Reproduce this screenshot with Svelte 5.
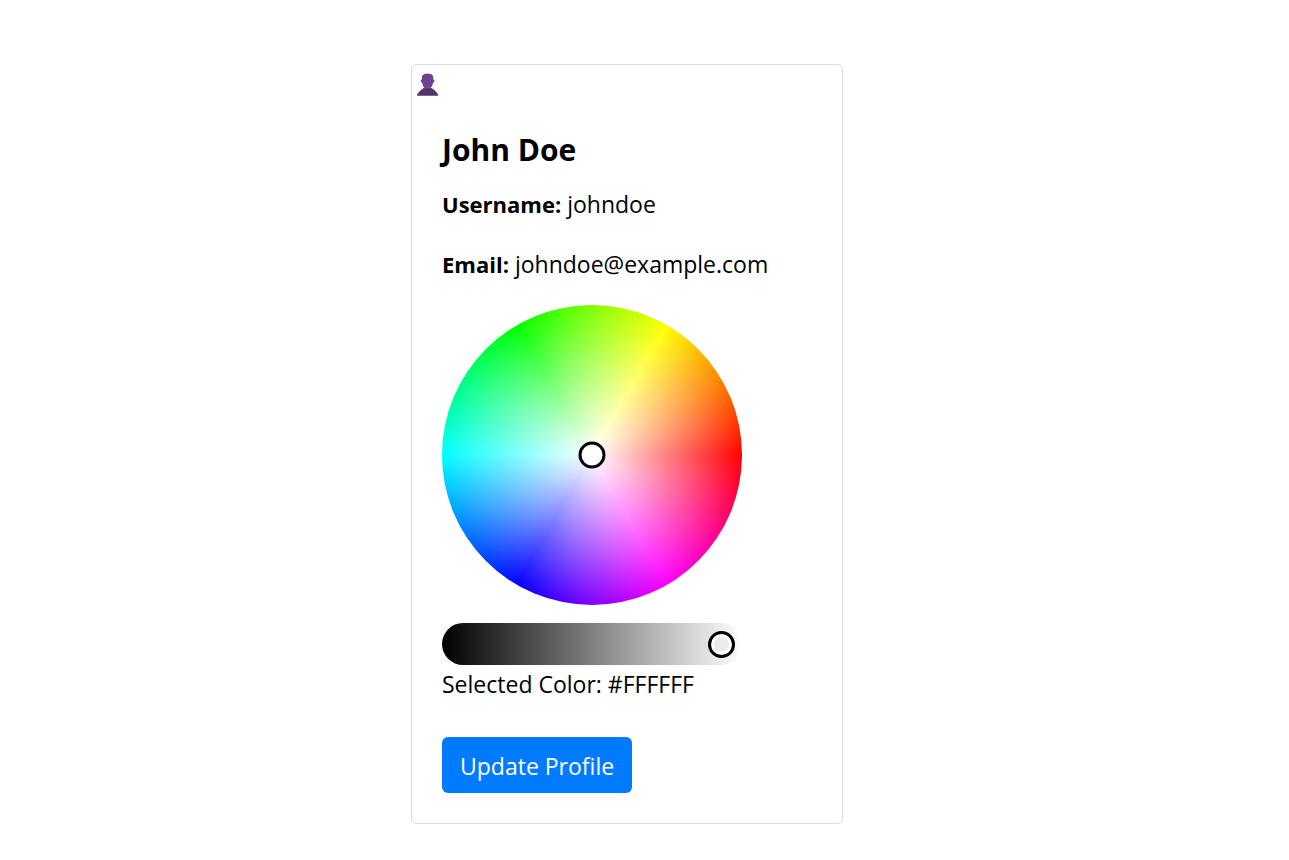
<script>
  const user = { name: 'John Doe', username: 'johndoe', email: 'johndoe@example.com' };

  let brightness = $state(100);
  let hue = $state(0);
  let saturation = $state(0);

  // HSV to hex, one channel at a time
  function channel(n, h, s, v) {
    const k = (n + h / 60) % 6;
    const level = v - v * s * Math.max(0, Math.min(k, 4 - k, 1));
    return Math.round(level * 255).toString(16).padStart(2, '0').toUpperCase();
  }

  const hex = $derived(
    '#' + [5, 3, 1].map((n) => channel(n, hue, saturation, brightness / 100)).join('')
  );
  const handleX = $derived(50 + 45 * saturation * Math.cos((hue * Math.PI) / 180));
  const handleY = $derived(50 - 45 * saturation * Math.sin((hue * Math.PI) / 180));

  function pick(event) {
    const box = event.currentTarget.getBoundingClientRect();
    const dx = event.clientX - box.left - box.width / 2;
    const dy = box.height / 2 - (event.clientY - box.top);
    hue = ((Math.atan2(dy, dx) * 180) / Math.PI + 360) % 360;
    saturation = Math.min(1, Math.hypot(dx, dy) / (box.width * 0.45));
  }
</script>

<main>
  <article class="card">
    <div class="avatar">
      <svg viewBox="0 0 22 24" role="img" aria-label="User">
        <path
          d="M0 22.700C1.200 19.300 4 16.800 7.600 15h6C17.200 16.800 20 19.300 21.200 22.700z"
          fill="#543468"
        />
        <path
          d="M.4 22.500C1.600 19.300 4 16.800 7.600 15M13.600 15C17.200 16.800 19.600 19.300 20.800 22.500"
          fill="none"
          stroke="#6b4190"
          stroke-width="1"
        />
        <path
          d="M10.600.4C7.600.4 5.600 1.400 5 3.400c-.3 1.200.2 2.200 0 3.200-1 0-1.400.7-1.200 1.600.2 1 .8 1.600 1.500 1.600.1 2.200.8 4 2.100 5 2 1.300 4.400 1.300 6.400 0 1.300-1 2-2.800 2.100-5 .7 0 1.300-.6 1.500-1.600.2-.9-.2-1.600-1.200-1.600-.2-1 .3-2 0-3.200-.6-2-2.600-3-5.600-3z"
          fill="#6b4190"
        />
      </svg>
    </div>
    <div class="body">
      <h2>{user.name}</h2>
      <p><strong>Username:</strong> {user.username}</p>
      <p><strong>Email:</strong> {user.email}</p>

      <div class="picker">
        <button class="wheel" type="button" aria-label="Hue and saturation" onclick={pick}>
          <span class="handle" style="left: {handleX}%; top: {handleY}%; background: {hex}"></span>
        </button>
        <input type="range" min="0" max="100" aria-label="Brightness" bind:value={brightness} />
      </div>
      <output>Selected Color: {hex}</output>

      <button class="update" type="button">Update Profile</button>
    </div>
  </article>
</main>

<style>
  :global(body) {
    margin: 0;
    background: #fff;
  }

  main {
    display: flex;
    justify-content: center;
    padding: 64px 35px 36px 0;
    font-family: "Open Sans", "Segoe UI", "Noto Sans", sans-serif;
    font-size: 23px;
    line-height: 38px;
    color: #000;
  }

  .card {
    box-sizing: border-box;
    width: 100%;
    max-width: 432px;
    border: 1px solid #ddd;
    border-radius: 6px;
  }

  .avatar {
    padding: 8px 5px 4px;
  }

  .avatar svg {
    display: block;
    width: 22px;
    height: 24px;
  }

  .body {
    display: flex;
    flex-direction: column;
    align-items: flex-start;
    padding: 30px;
  }

  h2 {
    margin: 0 0 16px;
    font-size: 30px;
    line-height: 38px;
    font-weight: 700;
  }

  p {
    margin: 0 0 22px;
  }

  strong {
    font-size: 22px;
    font-weight: 700;
  }

  .picker {
    display: flex;
    flex-direction: column;
    gap: 18px;
    width: 100%;
    max-width: 300px;
  }

  .wheel {
    position: relative;
    width: 100%;
    aspect-ratio: 1;
    padding: 0;
    border: 0;
    border-radius: 50%;
    background:
      radial-gradient(circle closest-side, #fff, transparent),
      conic-gradient(from 90deg, red, magenta, blue, aqua, lime, yellow, red);
  }

  .handle {
    position: absolute;
    box-sizing: border-box;
    width: 27px;
    height: 27px;
    border: 3px solid #000;
    border-radius: 50%;
    box-shadow: inset 0 0 0 5px #fff;
    transform: translate(-50%, -50%);
  }

  input {
    appearance: none;
    box-sizing: border-box;
    width: 100%;
    height: 42px;
    margin: 0;
    padding: 0 7px;
    border-radius: 21px;
    background: linear-gradient(to right, #000, #fff);
  }

  input::-webkit-slider-thumb {
    appearance: none;
    box-sizing: border-box;
    width: 27px;
    height: 27px;
    border: 3px solid #000;
    border-radius: 50%;
    background: #ebebeb;
    box-shadow: inset 0 0 0 3px #fff;
  }

  output {
    margin: 0 0 34px;
  }

  .update {
    height: 56px;
    padding: 2px 18px 0;
    border: 0;
    border-radius: 6px;
    background: #007bff;
    color: #fff;
    font: inherit;
    cursor: pointer;
  }
</style>
